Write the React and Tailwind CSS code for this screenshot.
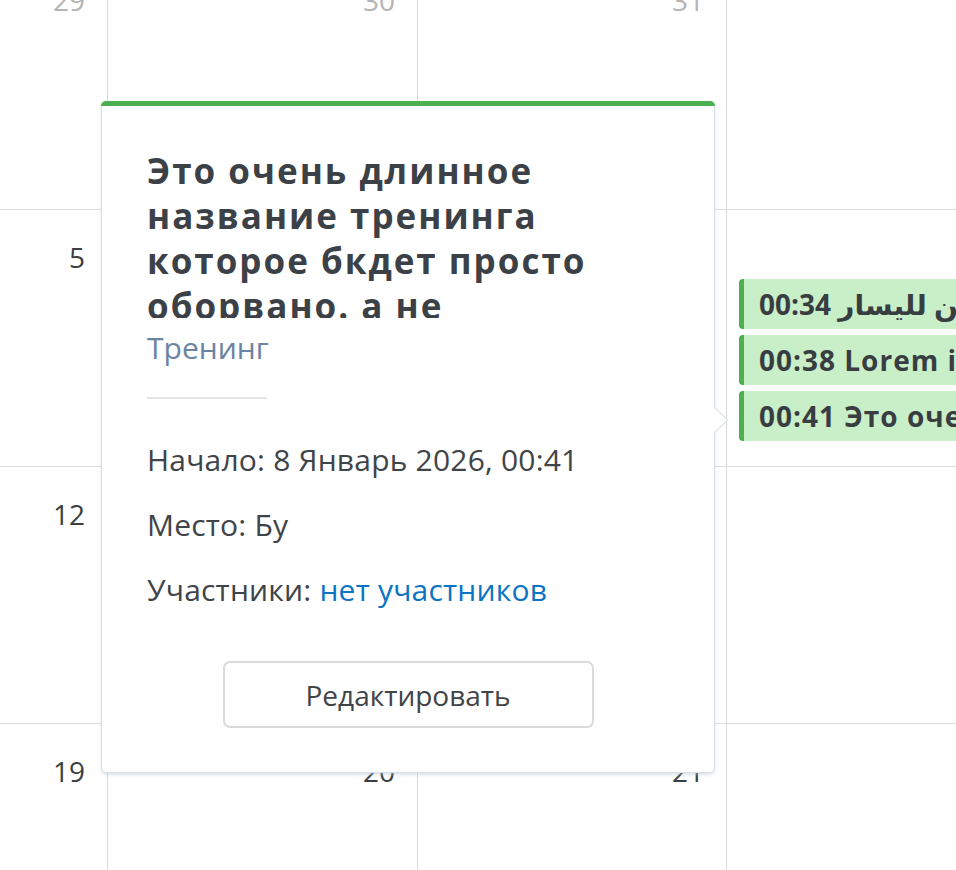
import React from "react";

const FONT = { fontFamily: '"Open Sans", "Noto Sans", "DejaVu Sans", sans-serif' };

const WEEKS = [
  [{ n: 29, muted: true }, { n: 30, muted: true }, { n: 31, muted: true }, { n: 1 }],
  [{ n: 5 }, { n: 6 }, { n: 7 }, { n: 8, events: ["00:34 من اليمين لليسار", "00:38 Lorem ipsum dolor sit amet", "00:41 Это очень длинное название"] }],
  [{ n: 12 }, { n: 13 }, { n: 14 }, { n: 15 }],
  [{ n: 19 }, { n: 20 }, { n: 21 }, { n: 22 }],
];

const COL_W = ["w-[310px]", "w-[310px]", "w-[309px]", "w-[310px]"];

function DayCell({ day, width }) {
  return (
    <div className={`${width} shrink-0 h-full border-r border-[#dadada] flex flex-col`}>
      <div className={`pt-[29px] pr-[22px] text-right text-[28px] leading-[36px] ${day.muted ? "text-[#b4b4b4]" : "text-[#3a3f44]"}`}>
        {day.n}
      </div>
      {day.events && (
        <div className="mt-[4px] ml-[12px] flex flex-col gap-[6px]">
          {day.events.map((ev, i) => (
            <div key={i} className="h-[50px] flex items-center pl-[15px] bg-[#c9efc9] border-l-[5px] border-[#4cb050] rounded-[4px] whitespace-nowrap overflow-hidden text-[28px] font-bold tracking-[1px] text-[#383d42]">
              {ev}
            </div>
          ))}
        </div>
      )}
    </div>
  );
}

function EventPopover() {
  return (
    <div className="absolute left-[101px] top-[101px] w-[614px] h-[672px] bg-white border border-[#d7dfe8] border-t-0 rounded-[5px] shadow-[0_2px_3px_rgba(180,195,210,0.45)]">
      <div className="h-[5px] -mx-px bg-[#4cb050] rounded-t-[5px]" />
      <div className="absolute right-[-10px] top-[309px] w-[20px] h-[20px] rotate-45 bg-white border-t border-r border-[#d7dfe8]" />
      <div className="relative pl-[45px] pr-[40px] pt-[42px]">
        <h2 className="w-[450px] h-[170px] overflow-hidden text-[35px] leading-[45px] font-bold tracking-[2px] text-[#3c4147]">
          Это очень длинное название тренинга которое бкдет просто оборвано. а не перенесено на следующую строку
        </h2>
        <div className="mt-[10px] text-[30px] leading-[40px] text-[#6b84a2]">Тренинг</div>
        <div className="mt-[29px] w-[120px] h-[2px] bg-[#e4e4e4]" />
        <div className="mt-[41px] flex flex-col gap-[25px] text-[30px] leading-[40px] tracking-[0.2px] text-[#3f4449]">
          <div>Начало: 8 Январь 2026, 00:41</div>
          <div>Место: Бу</div>
          <div>
            Участники: <span className="text-[#0b74c4]">нет участников</span>
          </div>
        </div>
        <div className="mt-[51px] flex justify-center pr-[5px]">
          <button className="w-[371px] h-[67px] border-2 border-[#dadada] rounded-[7px] bg-white text-[28px] text-[#3f4449]">
            Редактировать
          </button>
        </div>
      </div>
    </div>
  );
}

export default function App() {
  return (
    <div style={FONT} className="relative w-[956px] h-[870px] overflow-hidden bg-white">
      <div className="ml-[-202px] mt-[-47px] flex flex-col">
        {WEEKS.map((week, r) => (
          <div key={r} className="h-[257px] flex border-b border-[#dcdcdc]">
            {week.map((day, c) => (
              <DayCell key={c} day={day} width={COL_W[c]} />
            ))}
          </div>
        ))}
      </div>
      <EventPopover />
    </div>
  );
}
